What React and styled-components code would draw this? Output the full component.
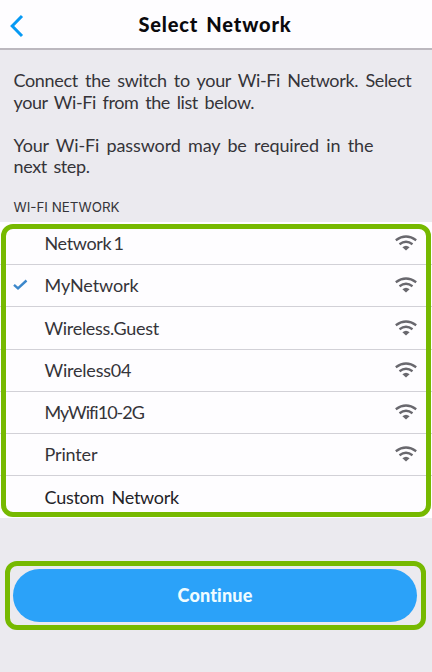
import React from 'react';
import styled, { createGlobalStyle } from 'styled-components';

const GlobalStyle = createGlobalStyle`
  * { box-sizing: border-box; }
  body { margin: 0; background: #ebeaef; }
`;

const Screen = styled.main`
  display: flex;
  flex-direction: column;
  height: 672px;
  overflow: hidden;
  background: #ebeaef;
  color: #353439;
  font-family: Lato, sans-serif;
  font-size: 18px;
`;

const Header = styled.header`
  display: grid;
  grid-template-columns: 40px 1fr 42px;
  align-items: center;
  height: 50px;
  flex: none;
  background: #fefdff;
  border-bottom: 2px solid #bcb8bf;
`;

const BackButton = styled.button`
  display: flex;
  padding: 3px 0 0 9px;
  border: 0;
  background: none;
`;

const Title = styled.h1`
  margin: 0 0 1px;
  text-align: center;
  white-space: nowrap;
  font-size: 20px;
  font-weight: 900;
  line-height: 24px;
  letter-spacing: 0.85px;
  word-spacing: 2.5px;
  color: #0b0a0d;
`;

const Intro = styled.section`
  display: flex;
  flex-direction: column;
  gap: 21.5px;
  padding: 20px 0 0 13.5px;
`;

const Paragraph = styled.p`
  margin: 0;
  line-height: 21.6px;
`;

const Line = styled.span`
  display: block;
  white-space: nowrap;
  letter-spacing: ${({ $tracking = 0 }) => $tracking}px;
  word-spacing: ${({ $gap = 0 }) => $gap}px;
`;

const SectionLabel = styled.h2`
  margin: 19px 0 0 13.5px;
  height: 25px;
  font: 400 13.4px/20px Inter, sans-serif;
`;

const NetworkPanel = styled.section`
  position: relative;
  flex: none;
  height: 296px;
  background: #fefdff;
`;

const Highlight = styled.div`
  position: absolute;
  inset: ${({ $inset }) => $inset};
  border: 5px solid #76b900;
  border-radius: 12px;
  pointer-events: none;
`;

const NetworkList = styled.ul`
  display: grid;
  grid-template-rows: repeat(7, 42.3px);
  margin: 0;
  padding: 0.8px 0 0;
  list-style: none;
`;

const NetworkRow = styled.li`
  display: grid;
  grid-template-columns: 31.5px 1fr 22px;
  align-items: center;
  padding: 0 15px 0.8px 13px;
  line-height: 22px;
  border-bottom: 1px solid #d2d1d7;

  &:last-child {
    padding-bottom: 0;
    border-color: transparent;
    color: #242328;
  }
`;

const CheckSlot = styled.span`
  display: flex;
`;

const Footer = styled.footer`
  position: relative;
  display: flex;
  height: 69px;
  margin: 43px 6px 0 5px;
  padding: 8px 9px 8px 8px;
`;

const ContinueButton = styled.button`
  flex: 1;
  border: 0;
  border-radius: 27px;
  padding: 0;
  background: #2ba2f9;
  color: #effcff;
  font: 900 18px/24px Lato, sans-serif;
  letter-spacing: 0.15px;
`;

function BackIcon() {
  return (
    <svg width="16" height="24" viewBox="0 0 16 24" fill="none">
      <path d="M13 2 3.2 12l9.8 10" stroke="#079af4" strokeWidth="3" />
    </svg>
  );
}

function CheckIcon() {
  return (
    <svg width="15" height="12" viewBox="0 0 15 12" fill="none">
      <path d="m1 5.8 4 3.6L13.5 1.5" stroke="#3c87cb" strokeWidth="2.4" />
    </svg>
  );
}

function WifiIcon() {
  return (
    <svg width="22" height="16" viewBox="0 0 22 16" fill="none">
      <path d="M.8 5.2Q11-2.2 21.2 5.2" stroke="#69686e" strokeWidth="2.3" />
      <path d="M4.5 9.2Q11 4.4 17.5 9.2" stroke="#69686e" strokeWidth="2.3" />
      <path d="M7.4 12.2Q11 9.2 14.6 12.2L11 15.6Z" fill="#69686e" />
    </svg>
  );
}

const networks = [
  { name: 'Network 1', gap: -2, tracking: -0.35, secured: true },
  { name: 'MyNetwork', tracking: -0.08, secured: true, selected: true },
  { name: 'Wireless.Guest', tracking: -0.3, secured: true },
  { name: 'Wireless04', tracking: -0.2, secured: true },
  { name: 'MyWifi10-2G', tracking: -0.98, secured: true },
  { name: 'Printer', tracking: -0.15, secured: true },
  { name: 'Custom Network', gap: 3, tracking: -0.25 },
];

export default function App() {
  return (
    <Screen>
      <GlobalStyle />
      <Header>
        <BackButton aria-label="Back"><BackIcon /></BackButton>
        <Title>Select Network</Title>
      </Header>
      <Intro>
        <Paragraph>
          <Line $gap={3} $tracking={-0.34}>Connect the switch to your Wi-Fi Network. Select</Line>
          <Line $gap={2.5} $tracking={-0.4}>your Wi-Fi from the list below.</Line>
        </Paragraph>
        <Paragraph>
          <Line $gap={2.9} $tracking={-0.13}>Your Wi-Fi password may be required in the</Line>
          <Line $gap={2.5} $tracking={-0.4}>next step.</Line>
        </Paragraph>
      </Intro>
      <SectionLabel>WI-FI NETWORK</SectionLabel>
      <NetworkPanel>
        <NetworkList>
          {networks.map((network) => (
            <NetworkRow key={network.name}>
              <CheckSlot>{network.selected && <CheckIcon />}</CheckSlot>
              <Line $gap={network.gap} $tracking={network.tracking}>{network.name}</Line>
              {network.secured && <WifiIcon />}
            </NetworkRow>
          ))}
        </NetworkList>
        <Highlight $inset="2px 1px 1px" />
      </NetworkPanel>
      <Footer>
        <ContinueButton>Continue</ContinueButton>
        <Highlight $inset="0" />
      </Footer>
    </Screen>
  );
}
